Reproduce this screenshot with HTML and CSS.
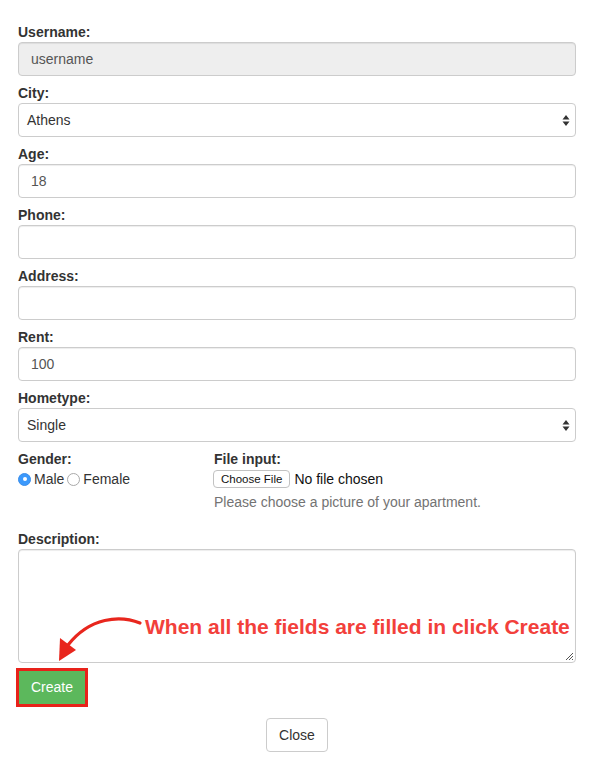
FILE: index.html
```html
<!DOCTYPE html>
<html>
<head>
<meta charset="utf-8">
<link rel="stylesheet" href="styles.css">
</head>
<body>
<form class="form">
  <div class="group">
    <label class="lbl">Username:</label>
    <div class="input disabled">username</div>
  </div>
  <div class="group">
    <label class="lbl">City:</label>
    <div class="select">Athens<svg class="arrows" width="8" height="13" viewBox="0 0 8 13"><path d="M4 1 L7.5 5.5 L0.5 5.5 Z M4 12 L7.5 7.5 L0.5 7.5 Z" fill="#333"/></svg></div>
  </div>
  <div class="group">
    <label class="lbl">Age:</label>
    <div class="input">18</div>
  </div>
  <div class="group">
    <label class="lbl">Phone:</label>
    <div class="input"></div>
  </div>
  <div class="group">
    <label class="lbl">Address:</label>
    <div class="input"></div>
  </div>
  <div class="group">
    <label class="lbl">Rent:</label>
    <div class="input">100</div>
  </div>
  <div class="group">
    <label class="lbl">Hometype:</label>
    <div class="select">Single<svg class="arrows" width="8" height="13" viewBox="0 0 8 13"><path d="M4 1 L7.5 5.5 L0.5 5.5 Z M4 12 L7.5 7.5 L0.5 7.5 Z" fill="#333"/></svg></div>
  </div>
  <div class="row">
    <div class="col-gender">
      <label class="lbl">Gender:</label>
      <div class="radios">
        <span class="radio checked"></span><span class="rtext">Male</span>
        <span class="radio"></span><span class="rtext">Female</span>
      </div>
    </div>
    <div class="col-file">
      <label class="lbl">File input:</label>
      <div class="file"><span class="choose">Choose File</span><span class="nofile">No file chosen</span></div>
      <p class="help">Please choose a picture of your apartment.</p>
    </div>
  </div>
  <div class="group desc">
    <label class="lbl">Description:</label>
    <div class="textarea">
      <svg class="grip" width="9" height="9" viewBox="0 0 9 9"><path d="M1 8 L8 1 M4 8 L8 4 M7 8 L8 7" stroke="#555" stroke-width="1"/></svg>
    </div>
    <div class="note">
      <svg class="arrow" width="110" height="60" viewBox="0 0 110 60"><path d="M100 16 C80 8 50 10 28 38" fill="none" stroke="#e8261d" stroke-width="3.2" stroke-linecap="round"/><path d="M19 54 L20 31 L36 43 Z" fill="#e8261d"/></svg>
      <span class="notetext">When all the fields are filled in click Create</span>
    </div>
  </div>
  <div class="create-wrap"><span class="btn-create">Create</span></div>
  <div class="footer"><span class="btn-close">Close</span></div>
</form>
</body>
</html>
```

FILE: styles.css
```css
* { box-sizing: border-box; }
html, body { margin: 0; padding: 0; background: #fff; }
body {
  font-family: "Liberation Sans", Arial, Helvetica, sans-serif;
  font-size: 14px;
  color: #333;
  width: 594px;
}
.form {
  padding: 22px 18px 0 18px;
}
.group { margin-bottom: 7px; position: relative; }
.lbl {
  display: block;
  font-weight: bold;
  line-height: 20px;
  height: 20px;
  color: #333;
}
.input, .select {
  height: 34px;
  border: 1px solid #ccc;
  border-radius: 4px;
  padding: 0 12px;
  line-height: 32px;
  color: #555;
  background: #fff;
  box-shadow: inset 0 1px 1px rgba(0,0,0,0.075);
}
.input.disabled { background: #eee; }
.select {
  position: relative;
  padding-left: 8px;
  color: #333;
  box-shadow: none;
}
.arrows { position: absolute; right: 5px; top: 10px; }
.row { display: flex; height: 80px; }
.col-gender { width: 196px; }
.col-file { flex: 1; }
.radios { display: flex; align-items: center; height: 20px; }
.radio {
  width: 13px; height: 13px; border-radius: 50%;
  border: 1px solid #a9a9a9;
  background: #fff;
  display: inline-block;
  margin-right: 3px;
  position: relative;
}
.radio.checked { background: #3b99fc; border-color: #3b8eea; }
.radio.checked::after {
  content: ""; position: absolute; width: 4px; height: 4px; border-radius: 50%;
  background: #fff; left: 3.5px; top: 3.5px;
}
.rtext { color: #333; margin-right: 3px; }
.file { display: flex; align-items: center; height: 20px; margin-top: 0; }
.choose {
  font-size: 11.5px;
  color: #111;
  border: 1px solid #c2c2c2;
  border-radius: 4px;
  padding: 0 7px;
  height: 18px;
  line-height: 17px;
  background: #fff;
  margin-left: -1px;
  margin-right: 4px;
}
.nofile { color: #111; font-size: 14px; }
.help { margin: 3px 0 0 0; color: #737373; line-height: 20px; }
.desc { margin-bottom: 0; }
.textarea {
  height: 114px;
  border: 1px solid #ccc;
  border-radius: 4px;
  position: relative;
  box-shadow: inset 0 1px 1px rgba(0,0,0,0.075);
}
.grip { position: absolute; right: 1px; bottom: 1px; }
.note {
  position: absolute; left: 0; top: 0; width: 100%; height: 100%;
  pointer-events: none;
}
.arrow { position: absolute; left: 22px; top: 78px; }
.notetext {
  position: absolute; left: 127px; top: 86px;
  font-size: 21px; font-weight: bold; color: #f2403b; white-space: nowrap;
  line-height: 24px;
}
.create-wrap { margin-top: 5px; margin-left: -2px; }
.btn-create {
  display: inline-block;
  border: 3px solid #e8221a;
  background: #5cb85c;
  color: #fff;
  width: 72px; height: 39px;
  line-height: 33px;
  text-align: center;
  font-size: 14px;
}
.footer { display: flex; justify-content: center; margin-top: 11px; }
.btn-close {
  display: inline-block;
  border: 1px solid #ccc;
  border-radius: 4px;
  width: 62px; height: 34px;
  line-height: 32px;
  text-align: center;
  color: #333;
  background: #fff;
}
```
